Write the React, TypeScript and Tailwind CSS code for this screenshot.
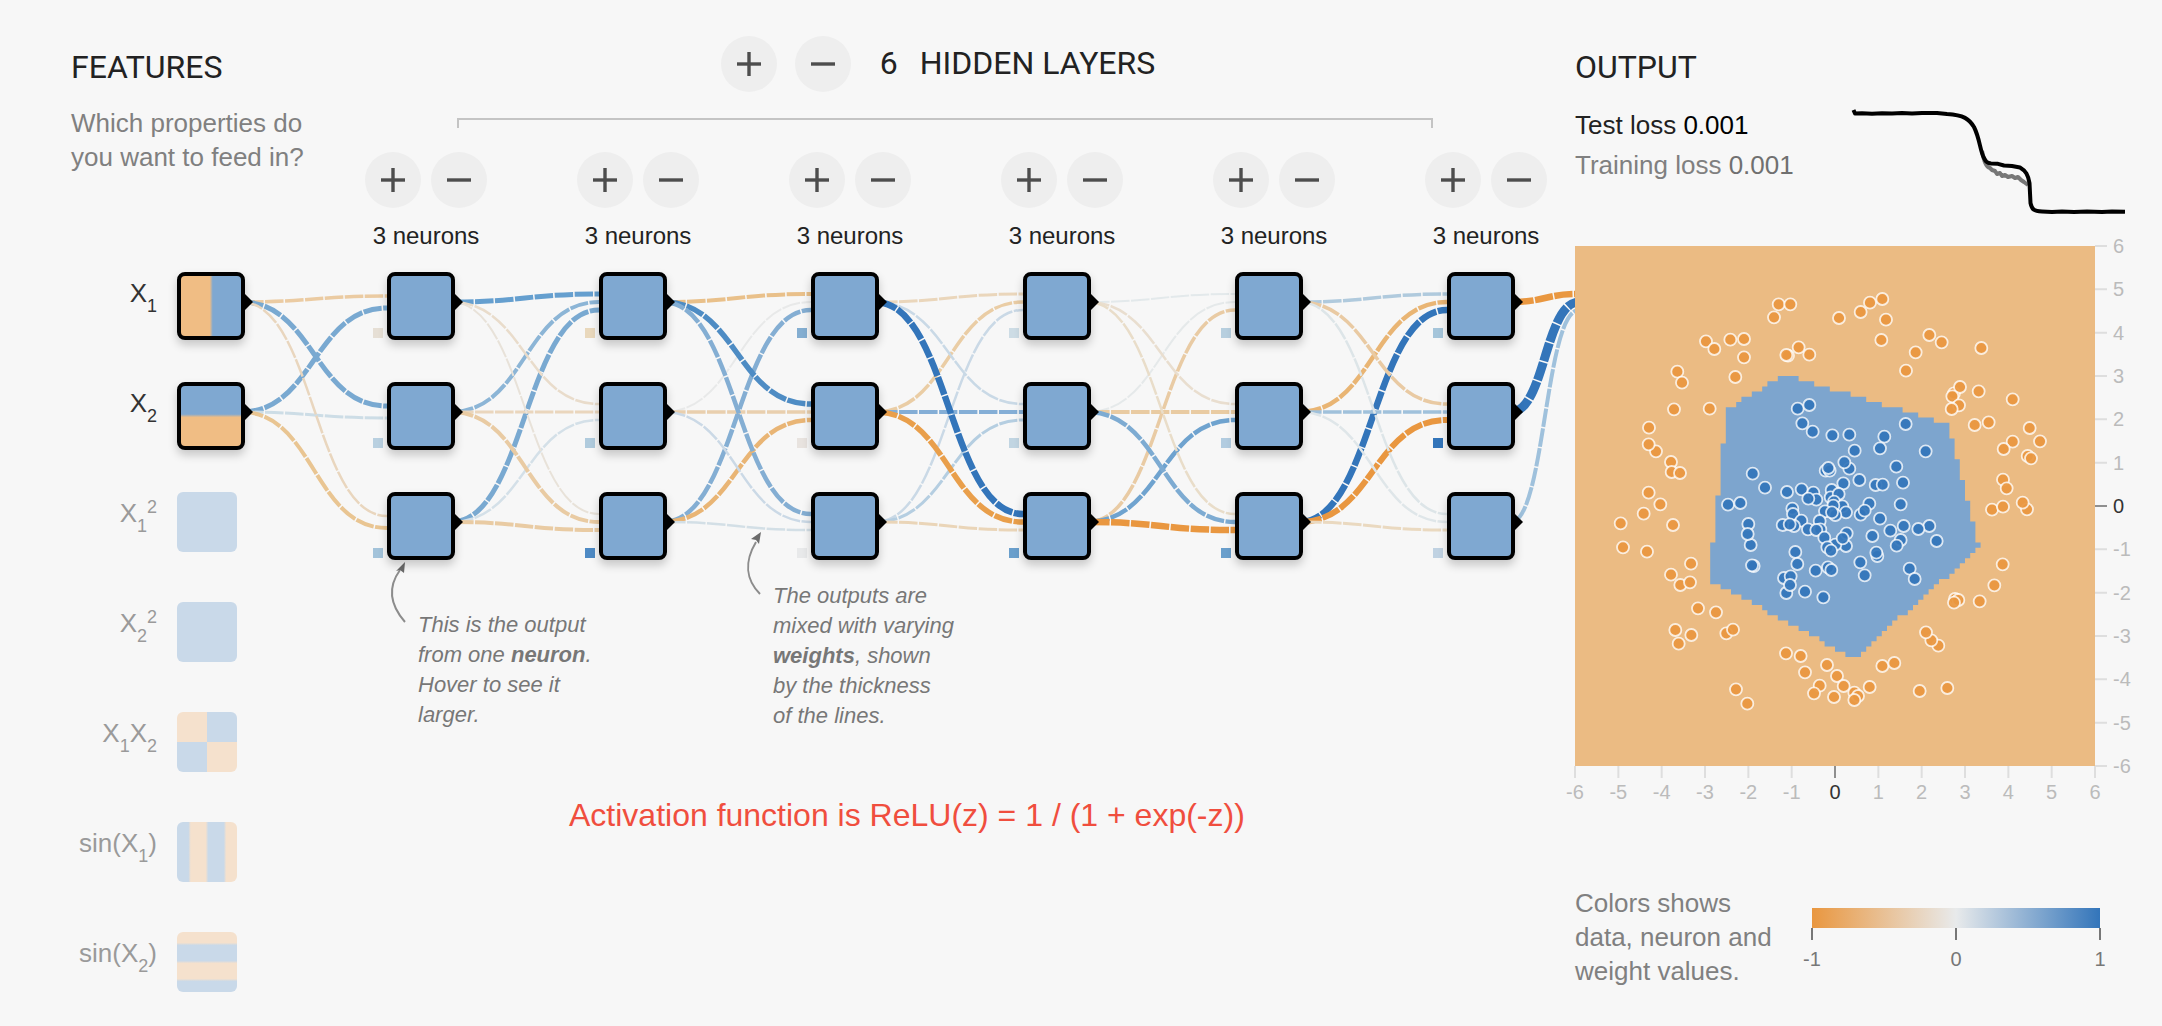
import React, { useLayoutEffect, useRef, useState } from 'react';

type Link = [color: string, width: number];

const BLUE = '#3375ba';
const ORANGE = '#e99740';

// links[layer][destination][source]
const LINKS: Link[][][] = [
  [
    [['#ebcba2', 3.5], ['#79a9d1', 5]],
    [['#79a9d1', 5], ['#cddde6', 3]],
    [['#e9d6be', 2.5], ['#e9c592', 4]],
  ],
  [
    [['#659fcf', 5], ['#8cb5d6', 4], ['#79a9d1', 5]],
    [['#e9dccb', 2.5], ['#ead6bd', 3], ['#d4e0e8', 2.5]],
    [['#e8e2d9', 2], ['#e9cba3', 4], ['#e9cba3', 4]],
  ],
  [
    [['#e9c08a', 4], ['#e8e9e9', 2], ['#84aed3', 4.5]],
    [['#4e8cc4', 5.5], ['#e9cfae', 3.5], ['#e9b575', 4.5]],
    [['#84aed3', 4.5], ['#cbd9e6', 2.5], ['#d3dfe6', 2.5]],
  ],
  [
    [['#ead6bb', 3], ['#eacda5', 3.5], ['#cad9e6', 2.5]],
    [['#c9d9e6', 2.5], ['#84aed6', 4], ['#b5cee1', 3]],
    [[BLUE, 6.5], ['#e99f4b', 5.5], ['#ead5b8', 3]],
  ],
  [
    [['#e3e9eb', 2], ['#e5e9ea', 2], ['#e9cba4', 3.5]],
    [['#e9decf', 2.5], ['#e9cba2', 4], ['#6fa3cf', 4.5]],
    [['#e9ddc9', 2.5], ['#7dabd2', 4.5], [ORANGE, 6.5]],
  ],
  [
    [['#b0cadd', 3.5], ['#e9b574', 4.5], [BLUE, 6.5]],
    [['#e9caa3', 3.5], ['#a0c1db', 3.5], [ORANGE, 6]],
    [['#dde5e8', 2.5], ['#dfe6e9', 2.5], ['#ead9c0', 3]],
  ],
  [[[ORANGE, 6.5], [BLUE, 9], ['#9fc1dc', 4]]],
];

const BIASES = [
  ['#e6dfd5', '#b9d0e0', '#a3c3da'],
  ['#e9d8bc', '#b0cbdd', '#4e8ac4'],
  ['#84aed1', '#e8e3df', '#e8e9ea'],
  ['#cddce5', '#c1d5e2', '#6a9fcc'],
  ['#b7cfdf', '#b2cce0', '#6a9fcc'],
  ['#a5c5da', '#3375ba', '#c0d2e2'],
];

const ROWS = [302, 412, 522];

// Horizontal measures of the network section
const FIRST = 142;
const LAYER_INSET = 148;
const LAYER_WIDTH = 122;

function Network({ width }: { width: number }) {
  const pitch = (width - LAYER_INSET - LAYER_WIDTH) / 5;
  const left = (k: number) => FIRST + k * pitch;
  const paths: React.ReactNode[] = [];
  LINKS.forEach((layer, k) => {
    const sx = k === 0 ? -4 : left(k - 1) + 64;
    const dx = k === 6 ? width + 4 : left(k);
    const mx = (sx + dx) / 2;
    layer.forEach((dest, d) =>
      dest.forEach(([color, w], s) => {
        const n = dest.length;
        const dy = ROWS[d] + ((s - (n - 1) / 2) / n) * 24;
        paths.push(
          <path
            key={`${k}-${d}-${s}`}
            d={`M${sx},${ROWS[s]}C${mx},${ROWS[s]} ${mx},${dy} ${dx},${dy}`}
            stroke={color}
            strokeWidth={w}
            strokeDasharray="18.500 1.500"
            strokeDashoffset={16}
            fill="none"
          />,
        );
      }),
    );
  });
  const arrow = (x: number, y: number) => (
    <path key={`${x}-${y}`} d={`M${x - 4},${y - 8}L${x},${y - 8}L${x + 8},${y}L${x},${y + 8}L${x - 4},${y + 8}Z`} fill="#000" />
  );
  return (
    <svg className="absolute inset-0 h-full w-full" aria-hidden="true">
      {paths}
      {arrow(0, 302)}
      {arrow(0, 412)}
      {[0, 1, 2, 3, 4, 5].map((k) => ROWS.map((y) => arrow(left(k) + 68, y)))}
      {BIASES.map((layer, k) =>
        layer.map((c, i) => <rect key={`b${k}-${i}`} x={left(k) - 14} y={ROWS[i] + 26} width="10" height="10" fill={c} />),
      )}
      <g fill="none" stroke="#8c8c8c" strokeWidth="2">
        <path d="M160,622C146,606 142,588 155,570" />
        <path d="M515,594C501,580 499,562 511,542" />
      </g>
      <g fill="#6b6b6b">
        <path d="M160,562L151,571L155,570L159,573Z" />
        <path d="M516,532L506,539L511,540L514,544Z" />
      </g>
    </svg>
  );
}

function RoundButton({ kind, label }: { kind: 'plus' | 'minus'; label: string }) {
  return (
    <button type="button" aria-label={label} className="flex h-14 w-14 items-center justify-center rounded-full bg-[#eeeeee]">
      <svg viewBox="0 0 24 24" className="h-6 w-6" fill="#4d4d4d" aria-hidden="true">
        <rect x="0" y="10.3" width="24" height="3.4" />
        {kind === 'plus' && <rect x="10.3" y="0" width="3.4" height="24" />}
      </svg>
    </button>
  );
}

const Sub = ({ children }: { children: React.ReactNode }) => (
  <sub className="-bottom-[10px] text-[18px]">{children}</sub>
);
const Sup = ({ children }: { children: React.ReactNode }) => <sup className="text-[18px]">{children}</sup>;

const FEATURES: { id: string; name: string; label: React.ReactNode; fill: string; on?: boolean }[] = [
  { id: 'x1', name: 'X1', on: true, label: <>X<Sub>1</Sub></>, fill: 'bg-[linear-gradient(to_right,#f0bd84_48%,#7fa8d1_53%)]' },
  { id: 'x2', name: 'X2', on: true, label: <>X<Sub>2</Sub></>, fill: 'bg-[linear-gradient(to_bottom,#7fa8d1_47%,#f0bd84_52%)]' },
  { id: 'x1s', name: 'X1 squared', label: <>X<Sub>1</Sub><Sup>2</Sup></>, fill: 'bg-[#c9d9e9]' },
  { id: 'x2s', name: 'X2 squared', label: <>X<Sub>2</Sub><Sup>2</Sup></>, fill: 'bg-[#c9d9e9]' },
  {
    id: 'x1x2', name: 'X1 times X2', label: <>X<Sub>1</Sub>X<Sub>2</Sub></>,
    fill: 'bg-[conic-gradient(#c9d9e9_25%,#f5e1cd_25%_50%,#c9d9e9_50%_75%,#f5e1cd_75%)]',
  },
  {
    id: 'sx1', name: 'sine of X1', label: <>sin(X<Sub>1</Sub>)</>,
    fill: 'bg-[linear-gradient(to_right,#c9d9e9_19%,#f5e1cd_23%_48%,#c9d9e9_52%_78%,#f5e1cd_82%)]',
  },
  {
    id: 'sx2', name: 'sine of X2', label: <>sin(X<Sub>2</Sub>)</>,
    fill: 'bg-[linear-gradient(to_bottom,#f5e1cd_18%,#c9d9e9_22%_48%,#f5e1cd_52%_78%,#c9d9e9_82%)]',
  },
];

function Features() {
  return (
    <section className="relative z-10 pt-[47px] pl-[71px]">
      <h2 className="font-['Roboto'] text-[32px] leading-10 text-[#222]">FEATURES</h2>
      <p className="mt-[19px] text-[26px] leading-[34px] whitespace-nowrap text-[#808080]">
        Which properties do
        <br />
        you want to feed in?
      </p>
      <ul className="mt-[98px] flex flex-col gap-[42px]">
        {FEATURES.map((f) => (
          <li key={f.id} className="flex h-[68px] items-start justify-between">
            <label
              htmlFor={f.id}
              className={`flex-1 pt-1 pr-5 text-right text-[26px] leading-[34px] whitespace-nowrap ${f.on ? 'text-[#333]' : 'text-[#9a9a9a]'}`}
            >
              {f.label}
            </label>
            <div className="w-[68px] shrink-0">
              <button
                id={f.id}
                type="button"
                aria-label={f.name}
                aria-pressed={!!f.on}
                className={
                  f.on
                    ? 'block h-[68px] w-[68px] rounded-lg border-4 border-black bg-black shadow-[0_5px_10px_rgba(0,0,0,0.2)]'
                    : 'block h-[60px] w-[60px]'
                }
              >
                <span className={`block h-[60px] w-[60px] ${f.on ? 'rounded-sm' : 'rounded-md'} ${f.fill}`} />
              </button>
            </div>
          </li>
        ))}
      </ul>
    </section>
  );
}

function HiddenLayers() {
  const ref = useRef<HTMLElement>(null);
  const [width, setWidth] = useState(1330);
  useLayoutEffect(() => {
    const el = ref.current;
    if (!el) return;
    const measure = () => setWidth(el.clientWidth);
    measure();
    const observer = new ResizeObserver(measure);
    observer.observe(el);
    return () => observer.disconnect();
  }, []);
  return (
    <section ref={ref} className="relative pt-9">
      <Network width={width} />
      <div className="relative">
        <header className="flex h-14 items-center justify-center pl-14">
          <RoundButton kind="plus" label="Add layer" />
          <div className="w-[18px]" />
          <RoundButton kind="minus" label="Remove layer" />
          <h2 className="flex gap-[22px] pb-0.5 pl-[29px] font-['Roboto'] text-[32px] leading-10 text-[#222]">
            <span>6</span>
            <span>HIDDEN LAYERS</span>
          </h2>
        </header>
        <div className="mt-[26px] mr-[142px] ml-[212px] h-2.5 border-x-2 border-t-2 border-[#c4c4c4]" />
        <div className="mt-6 flex justify-between pr-7 pl-[120px]">
          {[0, 1, 2, 3, 4, 5].map((k) => (
            <div key={k} className="w-[122px]">
              <div className="flex justify-between">
                <RoundButton kind="plus" label={`Add neuron to layer ${k + 1}`} />
                <RoundButton kind="minus" label={`Remove neuron from layer ${k + 1}`} />
              </div>
              <p className="mt-3 text-center text-2xl leading-8 whitespace-nowrap text-[#222]">3 neurons</p>
              <div className="mt-5 flex flex-col gap-[42px] pl-[22px]">
                {ROWS.map((y) => (
                  <div
                    key={y}
                    className="h-[68px] w-[68px] rounded-lg border-4 border-black bg-black shadow-[0_5px_10px_rgba(0,0,0,0.2)]"
                  >
                    <div className="h-[60px] w-[60px] rounded-sm bg-[#7fa8d1]" />
                  </div>
                ))}
              </div>
            </div>
          ))}
        </div>
        <div className="mt-5 flex items-start pl-[173px] text-[22px] leading-[30px] text-[#777] italic">
          <p className="mt-[30px] w-[355px] shrink-0">
            This is the output
            <br />
            from one <b>neuron</b>.
            <br />
            Hover to see it
            <br />
            larger.
          </p>
          <p className="mt-px shrink-0">
            The outputs are
            <br />
            mixed with varying
            <br />
            <b>weights</b>, shown
            <br />
            by the thickness
            <br />
            of the lines.
          </p>
        </div>
        <p className="mt-16 pl-[324px] text-[32px] leading-10 whitespace-nowrap text-[#f04e3e]">
          Activation function is ReLU(z) = 1 / (1 + exp(-z))
        </p>
      </div>
    </section>
  );
}

// Samples, in thirds of a pixel from the plot's upper left corner
const ORANGE_POINTS = [
  611, 175, 646, 175, 597, 214, 792, 216, 857, 198, 885, 170, 393, 286, 418, 309, 466, 281, 507, 279, 507, 334, 671, 304,
  639, 329, 634, 327, 703, 326, 307, 377, 321, 410, 481, 393, 404, 488, 297, 490, 222, 545, 243, 616, 221, 595, 288, 648,
  290, 678, 315, 681, 221, 740, 256, 775, 206, 803, 922, 159, 933, 221, 919, 282, 1063, 267, 1100, 289, 1022, 319, 1219,
  306, 993, 374, 1137, 442, 1155, 423, 1211, 436, 1132, 451, 1313, 460, 1152, 478, 1130, 489, 1199, 537, 1241, 529, 1364,
  546, 1313, 587, 1395, 586, 1286, 609, 1358, 630, 1368, 637, 1284, 701, 1295, 727, 1251, 791, 1284, 782, 1356, 790, 1343,
  770, 137, 832, 294, 837, 144, 904, 216, 917, 348, 953, 288, 986, 316, 1017, 345, 1009, 369, 1087, 423, 1099, 301, 1152,
  349, 1167, 311, 1193, 454, 1162, 474, 1151, 483, 1330, 517, 1373, 633, 1222, 677, 1230, 690, 1279, 756, 1257, 786, 1290,
  734, 1319, 717, 1342, 806, 1320, 777, 1353, 838, 1340, 849, 1350, 838, 1362, 884, 1323, 922, 1260, 958, 1251, 1034,
  1335, 1117, 1326, 1090, 1199, 1069, 1183, 1053, 1159, 1140, 1059, 1150, 1062, 1137, 1070, 1214, 1066, 1258, 1018, 1283,
  955,
];
const BLUE_POINTS = [
  668, 488, 703, 477, 682, 532, 713, 557, 772, 568, 823, 566, 839, 614, 823, 668, 808, 649, 752, 674, 764, 674, 760, 666,
  533, 683, 570, 725, 853, 702, 805, 712, 902, 717, 636, 738, 680, 730, 715, 740, 770, 732, 724, 761, 700, 758, 767, 754,
  791, 744, 459, 776, 496, 771, 777, 767, 802, 781, 775, 779, 883, 773, 652, 788, 750, 796, 813, 799, 857, 806, 869, 794,
  992, 534, 928, 572, 915, 607, 1052, 616, 964, 662, 923, 716, 984, 710, 977, 775, 915, 818, 520, 834, 527, 897, 518, 864,
  536, 960, 531, 958, 654, 804, 679, 824, 623, 837, 657, 840, 644, 835, 734, 825, 699, 850, 736, 850, 724, 852, 781, 807,
  771, 799, 815, 862, 748, 875, 813, 900, 781, 896, 803, 877, 757, 904, 768, 914, 892, 870, 661, 918, 667, 954, 722, 974,
  759, 964, 769, 972, 856, 949, 869, 988, 627, 996, 647, 991, 634, 1041, 645, 1017, 690, 1037, 745, 1054, 907, 930, 904,
  920, 986, 840, 1063, 840, 946, 854, 1030, 849, 1085, 885, 977, 882, 965, 899, 1004, 968, 1019, 999,
];

const REGION = [
  [456, 490], [628, 386], [1120, 535], [1214, 905], [835, 1238], [402, 1000],
];
const CELL = 15.6;

// The classifier's decision area, drawn on a 100 x 100 grid
function regionPath() {
  let d = '';
  for (let r = 0; r < 100; r++) {
    const y = (r + 0.5) * CELL;
    const xs: number[] = [];
    REGION.forEach(([x1, y1], i) => {
      const [x2, y2] = REGION[(i + 1) % REGION.length];
      if (y1 <= y !== y2 <= y) xs.push(x1 + ((y - y1) / (y2 - y1)) * (x2 - x1));
    });
    if (xs.length < 2) continue;
    const a = Math.round(Math.min(...xs) / CELL) * CELL;
    const b = Math.round(Math.max(...xs) / CELL) * CELL;
    if (b > a) d += `M${a},${r * CELL}H${b}V${(r + 1) * CELL + 0.5}H${a}Z`;
  }
  return d;
}

function dots(list: number[], fill: string) {
  const out: React.ReactNode[] = [];
  for (let i = 0; i < list.length; i += 2)
    out.push(<circle key={i} cx={list[i] / 3} cy={list[i + 1] / 3} r="6" fill={fill} />);
  return out;
}

function HeatMap() {
  return (
    <svg
      className="mt-[29px] block h-[560px] w-[587px] overflow-visible font-['Liberation_Sans',sans-serif] text-[20px]"
      role="img"
      aria-label="Output plot"
    >
      <rect width="520" height="520" fill="#ebbb83" />
      <path d={regionPath()} transform="scale(0.333333)" fill="#7da5ce" />
      <g stroke="#fff" strokeOpacity="0.78" strokeWidth="1.8" fillOpacity="0.93">
        {dots(ORANGE_POINTS, ORANGE)}
        {dots(BLUE_POINTS, BLUE)}
      </g>
      {Array.from({ length: 13 }, (_, i) => i - 6).map((v) => {
        const p = ((v + 6) * 520) / 12;
        const tick = v === 0 ? '#8f8f8f' : '#dedede';
        const ink = v === 0 ? '#333' : '#bbb';
        return (
          <g key={v} fill={ink}>
            <path d={`M${p},520v12M520,${520 - p}h12`} stroke={tick} strokeWidth="2" />
            <text x={p} y="553" textAnchor="middle">{v}</text>
            <text x="538" y={527 - p}>{v}</text>
          </g>
        );
      })}
    </svg>
  );
}

function Output() {
  return (
    <section className="relative z-10 pt-[47px]">
      <h2 className="font-['Roboto'] text-[32px] leading-10 text-[#222]">OUTPUT</h2>
      <div className="mt-[18px] flex h-28 justify-between pr-9 text-[26px] leading-10">
        <div>
          <p className="text-[#222]">Test loss <span className="text-black">0.001</span></p>
          <p className="text-[#808080]">Training loss <span className="text-[#707070]">0.001</span></p>
        </div>
        <svg viewBox="0 0 274 112" className="h-28 w-[274px] overflow-visible" fill="none" strokeWidth="4" strokeLinejoin="round" aria-hidden="true">
          <path
            stroke="#777"
            d="M130,46C132,56 134,62 138,63L140,65L143,66L145,69L148,68L150,71L153,70L156,72L160,71L163,73L166,72L169,75L172,77L176,80"
          />
          <path
            stroke="#000"
            d="M1.500,5L3,8.500L10,8.300L20,8.700L30,8.200L40,8.600L50,8.100L60,8.400L70,7.900L85,8L95,9C112,10 117,14 122,22C128,34 128,46 132,53C134,57 135,58 139,58.500L146,58.800L152,60.500L160,61L168,62.500C174,66 176,70 177.500,78L178.500,98C180,105 182,106 190,106.500L200,107L210,106.500L222,107L235,106.600L250,107L260,106.500L273,106.800"
          />
        </svg>
      </div>
      <HeatMap />
      <div className="mt-20 flex items-start">
        <p className="w-[231px] text-[26px] leading-[34px] whitespace-nowrap text-[#808080]">
          Colors shows
          <br />
          data, neuron and
          <br />
          weight values.
        </p>
        <svg className="mt-[22px] h-16 w-[310px] overflow-visible font-['Liberation_Sans',sans-serif] text-[20px]" role="img" aria-label="Color scale from -1 to 1">
          <defs>
            <linearGradient id="scale">
              <stop offset="0" stopColor={ORANGE} />
              <stop offset="0.5" stopColor="#e8eaeb" />
              <stop offset="1" stopColor={BLUE} />
            </linearGradient>
          </defs>
          <rect x="6" width="288" height="20" fill="url(#scale)" />
          <path d="M6,20v12M150,20v12M294,20v12" stroke="#777" strokeWidth="2" />
          <g fill="#777" textAnchor="middle">
            <text x="6" y="58">-1</text>
            <text x="150" y="58">0</text>
            <text x="294" y="58">1</text>
          </g>
        </svg>
      </div>
    </section>
  );
}

export default function App() {
  return (
    <main className="grid min-h-screen grid-cols-[245px_minmax(1100px,1fr)_587px] bg-[#f7f7f7] font-['Liberation_Sans',Arial,sans-serif]">
      <Features />
      <HiddenLayers />
      <Output />
    </main>
  );
}
